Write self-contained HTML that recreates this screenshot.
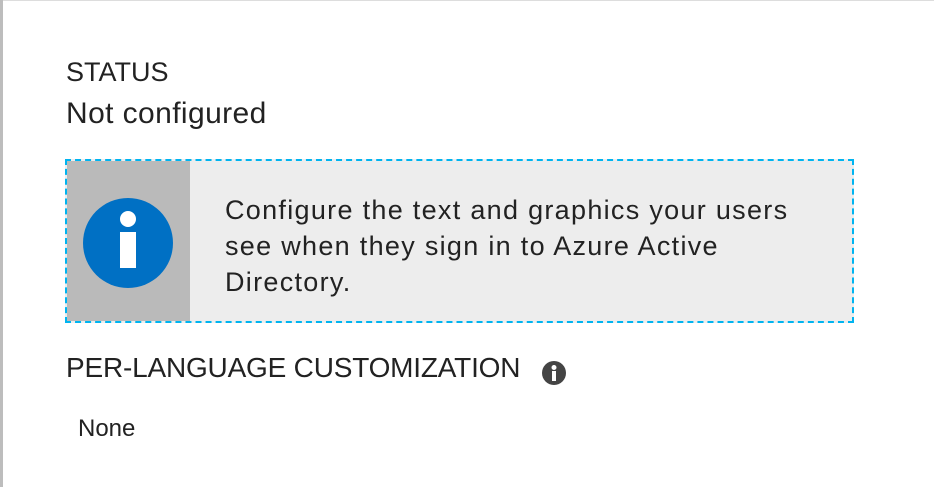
<!DOCTYPE html>
<html><head><style>
body{margin:0;width:934px;height:487px;background:#fff;position:relative;overflow:hidden;font-family:"Liberation Sans",sans-serif;color:#222}
.lb{position:absolute;left:0;top:0;width:3px;height:487px;background:#bdbdbd}
.tb{position:absolute;left:0;top:0;width:934px;height:1px;background:#ddd}
.t{position:absolute;white-space:nowrap}
.box{position:absolute;left:65px;top:159px;width:785px;height:160px;border:2px dashed #00b4f0;background:#ededed}
.side{position:absolute;left:0;top:0;width:123px;height:160px;background:#bababa}
</style></head><body>
<div class="tb"></div><div class="lb"></div>
<div class="t" style="left:66px;top:57px;font-size:27px">STATUS</div>
<div class="t" style="left:66px;top:97px;font-size:30px;letter-spacing:0.4px">Not configured</div>
<div class="box"><div class="side">
<svg width="123" height="160"><circle cx="61" cy="82" r="45" fill="#0070c4"/><circle cx="61" cy="58" r="8" fill="#fff"/><rect x="53" y="71" width="16" height="36" fill="#fff"/></svg>
</div>
<div class="t" style="left:158px;top:31px;font-size:27px;line-height:36px;letter-spacing:1.3px">Configure the text and graphics your users<br>see when they sign in to Azure Active<br>Directory.</div>
</div>
<div class="t" style="left:66px;top:352px;font-size:28px;letter-spacing:-0.2px">PER-LANGUAGE CUSTOMIZATION</div>
<svg style="position:absolute;left:541px;top:360px" width="26" height="26"><circle cx="13" cy="13" r="12" fill="#444"/><circle cx="13" cy="7.5" r="2.5" fill="#fff"/><rect x="11" y="11" width="4" height="10" fill="#fff"/></svg>
<div class="t" style="left:78px;top:415px;font-size:24px">None</div>
</body></html>
